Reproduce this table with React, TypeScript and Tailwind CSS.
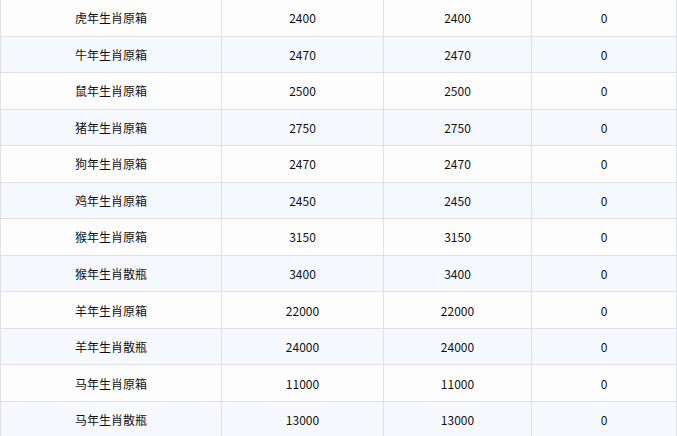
import React from "react";

const rows: [string, string, string, string][] = [
  ["虎年生肖原箱", "2400", "2400", "0"],
  ["牛年生肖原箱", "2470", "2470", "0"],
  ["鼠年生肖原箱", "2500", "2500", "0"],
  ["猪年生肖原箱", "2750", "2750", "0"],
  ["狗年生肖原箱", "2470", "2470", "0"],
  ["鸡年生肖原箱", "2450", "2450", "0"],
  ["猴年生肖原箱", "3150", "3150", "0"],
  ["猴年生肖散瓶", "3400", "3400", "0"],
  ["羊年生肖原箱", "22000", "22000", "0"],
  ["羊年生肖散瓶", "24000", "24000", "0"],
  ["马年生肖原箱", "11000", "11000", "0"],
  ["马年生肖散瓶", "13000", "13000", "0"],
];

export default function App() {
  return (
    <div
      className="w-[677px] h-[436px] overflow-hidden bg-white text-[12px] text-[#111]"
      style={{ fontFamily: '"Noto Sans CJK SC", "Noto Sans", sans-serif' }}
    >
      <div className="w-[677px] border-l border-[#dfe1e6]">
        {rows.map((r, i) => (
          <div
            key={i}
            className={`grid grid-cols-[221px_162px_148px_145px] h-[36.545px] border-b border-[#dfe1e6] ${
              i % 2 === 1 ? "bg-[#f6f9ff]" : "bg-[#fdfdfd]"
            }`}
          >
            {r.map((c, j) => (
              <div
                key={j}
                className="flex items-center justify-center border-r border-[#dfe1e6] leading-none pt-px"
              >
                {c}
              </div>
            ))}
          </div>
        ))}
      </div>
    </div>
  );
}
